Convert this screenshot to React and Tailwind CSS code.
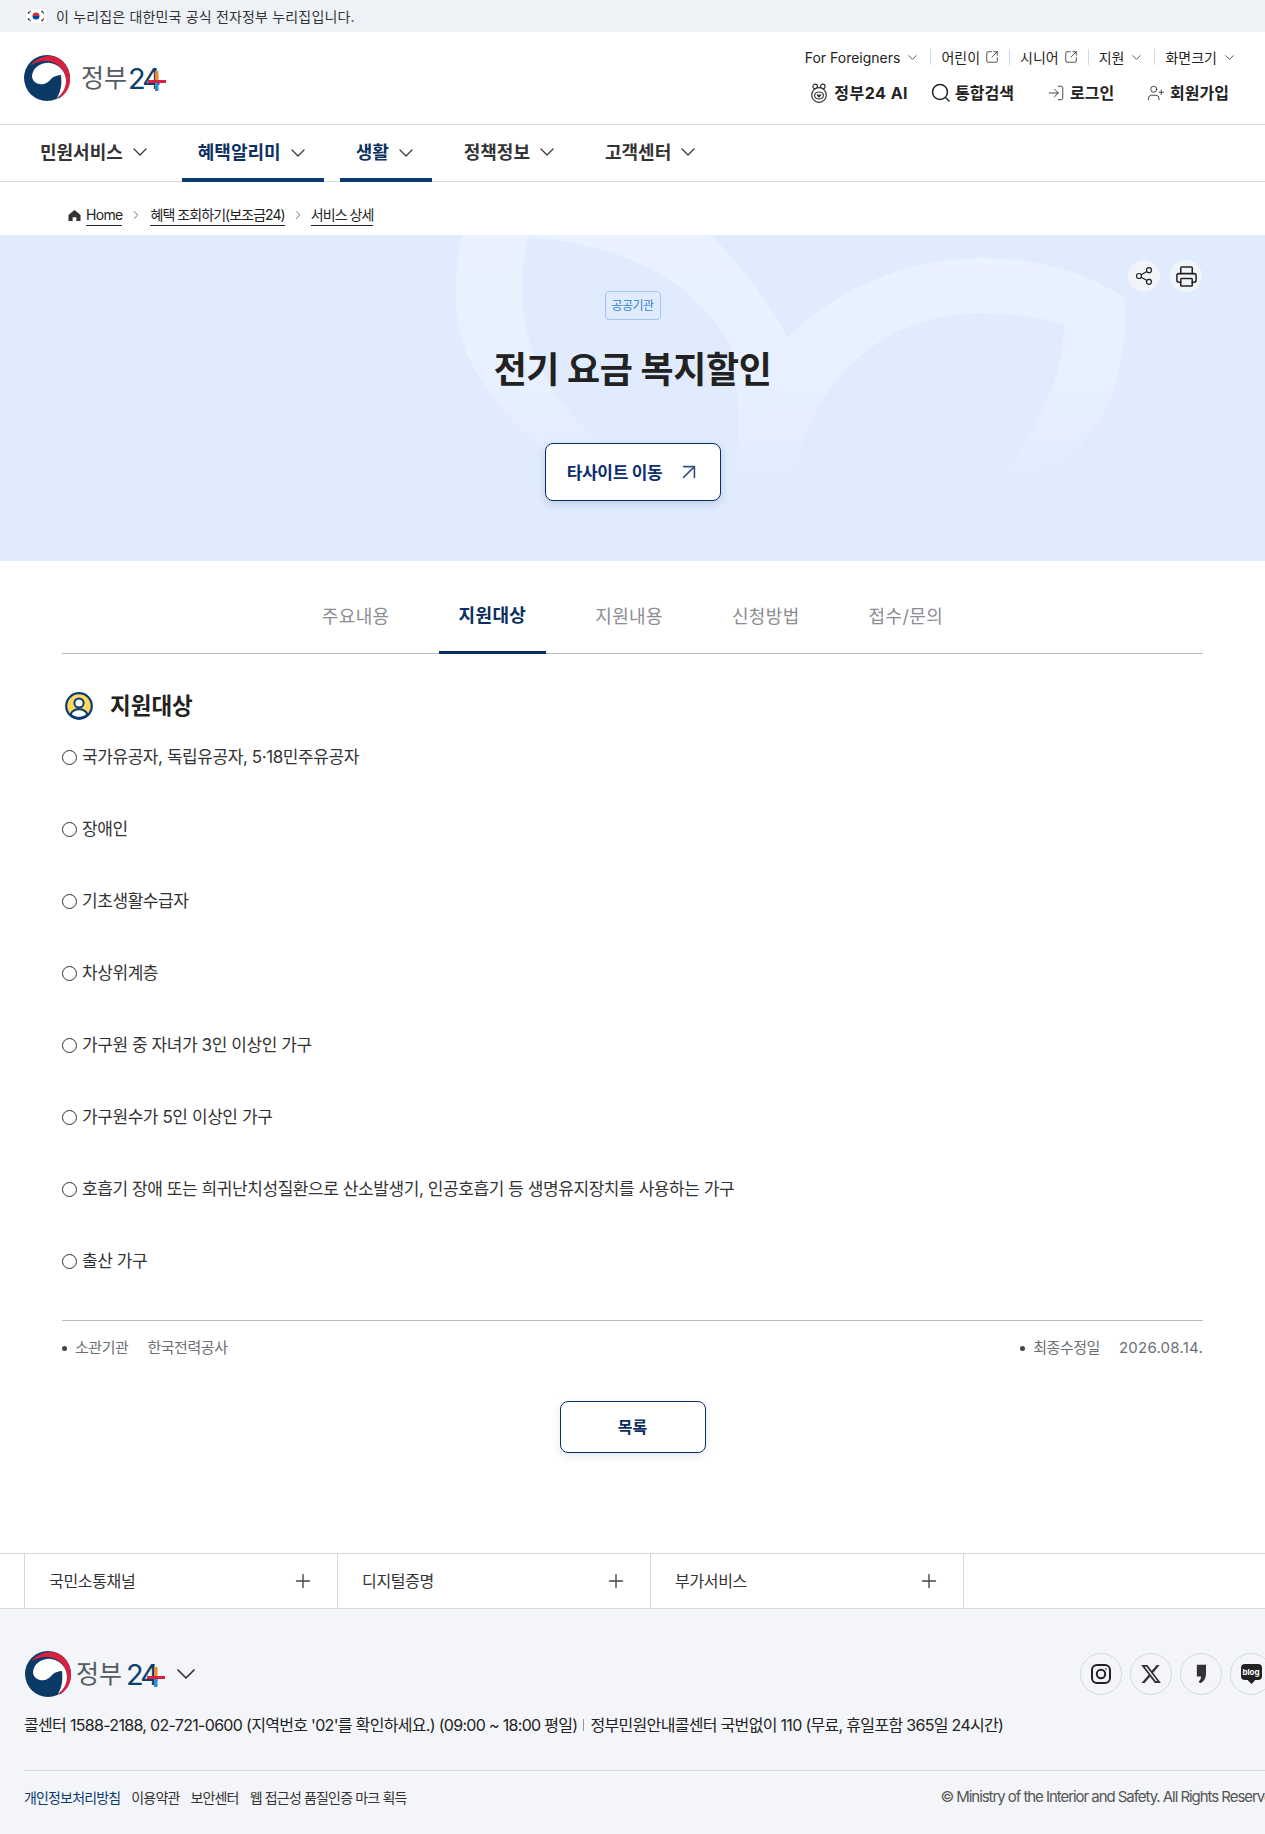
import { ChevronDown, ChevronRight, SquareArrowOutUpRight, LogIn, UserPlus, Share2, Printer, ArrowUpRight, Plus } from "lucide-react";

const navItems = [
  { label: "민원서비스" },
  { label: "혜택알리미", active: true },
  { label: "생활", active: true },
  { label: "정책정보" },
  { label: "고객센터" },
];
const tabs = ["주요내용", "지원대상", "지원내용", "신청방법", "접수/문의"];
const targets = [
  "국가유공자, 독립유공자, 5·18민주유공자",
  "장애인",
  "기초생활수급자",
  "차상위계층",
  "가구원 중 자녀가 3인 이상인 가구",
  "가구원수가 5인 이상인 가구",
  "호흡기 장애 또는 희귀난치성질환으로 산소발생기, 인공호흡기 등 생명유지장치를 사용하는 가구",
  "출산 가구",
];

// taegeuk mark of the logo
function Mark({ className }) {
  return (
    <svg viewBox="0 0 46 46" className={className}>
      <circle cx="23" cy="23" r="23" fill="#0b3a66" />
      <path d="M6 11C12 3 22-1 32 2c10 4 15 15 14 25-1 7-5 13-12 17 4-6 8-13 8-20C41 14 32 6 22 6 15 6 10 8 6 11Z" fill="#d8203f" />
      <path d="M8 21C9 12 18 7 26 8c9 1 16 9 16 18 0 7-4 13-9 17 4-7 5-14 4-23-3 0-7 1-10 4-3 4-7 6-12 5-4-1-7-4-7-8Z" fill="#fff" />
    </svg>
  );
}

function Logo({ big }) {
  return (
    <div className="flex items-center">
      <Mark className="w-[46px] h-[46px] shrink-0" />
      <div className={big ? "relative flex items-center ml-[5px] h-[30px] pt-[2px] pr-[9px]" : "relative flex items-center ml-[11px] h-[30px] pt-[2px] pr-[8px]"}>
        <span className="text-[25px] font-normal text-[#555b61]">정부</span>
        <span className={big ? "text-[29px] font-normal text-[#0b3f6e] ml-[4px] tracking-[-0.1em]" : "text-[29px] font-normal text-[#0b3f6e] ml-[1px] tracking-[-0.1em]"}>24</span>
        <svg viewBox="0 0 18 20" className="absolute right-0 top-[8px] w-[18px] h-[20px]">
          <rect x="7" y="0" width="3.500" height="9" fill="#ee8a2c" />
          <rect x="7" y="12" width="3.500" height="8" fill="#2b8fd0" />
          <rect x="0" y="9" width="18" height="3" fill="#d8203f" />
        </svg>
      </div>
    </div>
  );
}

function Flag() {
  return (
    <svg viewBox="0 0 20 14" className="w-5 h-[14px]">
      <rect width="20" height="14" fill="#fff" />
      <path d="M6.500 7a3.500 3.500 0 0 1 7 0Z" fill="#cd2e3a" />
      <path d="M6.500 7a3.500 3.500 0 0 0 7 0Z" fill="#0047a0" />
      <g stroke="#333" strokeWidth="1.6" strokeDasharray="2 .6">
        <path d="M2 4.500 4.500 2" />
        <path d="M15.500 2 18 4.500" />
        <path d="M2 9.500 4.500 12" />
        <path d="M15.500 12 18 9.500" />
      </g>
    </svg>
  );
}

// 정부24 AI mascot
function AiIcon() {
  return (
    <svg viewBox="0 0 20 20" className="w-[20px] h-[20px]" fill="none" stroke="#333" strokeWidth="1.200">
      <circle cx="6.200" cy="3.500" r="2.300" />
      <circle cx="13.800" cy="3.500" r="2.300" />
      <circle cx="10" cy="12" r="7.300" fill="#fff" />
      <ellipse cx="10" cy="12.500" rx="4.400" ry="3.500" />
      <path d="M8.500 12h3L10 14Z" fill="#333" />
    </svg>
  );
}

function PersonIcon() {
  return (
    <svg viewBox="0 0 28 28" className="w-7 h-7">
      <circle cx="14" cy="14" r="12.800" fill="#fdd85d" stroke="#0b3a78" strokeWidth="2.200" />
      <circle cx="14" cy="11" r="4.600" fill="#fff" stroke="#0b3a78" strokeWidth="2" />
      <path d="M5.500 22.500c1.500-3.500 5-5.200 8.500-5.200s7 1.700 8.500 5.200c-2 2.300-5 3.400-8.500 3.400s-6.500-1.100-8.500-3.400Z" fill="#fff" stroke="#0b3a78" strokeWidth="2" />
    </svg>
  );
}

function Social({ children }) {
  return (
    <div className="w-[42px] h-[42px] shrink-0 rounded-full border border-[#d5d8dc] flex items-center justify-center">
      {children}
    </div>
  );
}

function TopLink({ label, icon, sep }) {
  return (
    <div className="flex items-center">
      {sep && <span className="w-px h-[16px] bg-[#d5d8dc] mx-[10px]" />}
      <span>{label}</span>
      {icon === "down" && <ChevronDown size={15} strokeWidth={1.200} className="ml-[5px] text-[#222]" />}
      {icon === "ext" && <SquareArrowOutUpRight size={14} strokeWidth={1.300} className="ml-[5px] text-[#222]" />}
    </div>
  );
}

function BottomCell({ label }) {
  return (
    <div className="w-[313px] h-full shrink-0 border-r border-[#d5d8dc] flex items-center justify-between pl-6 pr-[23px]">
      <span className="text-[16px] text-[#333] tracking-[-0.02em]">{label}</span>
      <Plus size={22} strokeWidth={1.500} className="text-[#444]" />
    </div>
  );
}

export default function App() {
  return (
    <div className="w-[1265px] h-[1834px] overflow-hidden bg-white text-[#222] font-['Inter','Noto_Sans_CJK_KR',sans-serif]">
      {/* government banner */}
      <div className="h-8 bg-[#eef2f7] flex items-center pl-[26px] text-[14px] text-[#333] tracking-[0.012em]">
        <Flag />
        <span className="ml-[10px]">이 누리집은 대한민국 공식 전자정부 누리집입니다.</span>
      </div>

      {/* header */}
      <header className="h-[93px] border-b border-[#d5d8dc] flex justify-between pl-6 pr-[28px]">
        <div className="flex items-center pb-[1px]">
          <Logo />
        </div>
        <div className="flex flex-col items-end pt-[14px]">
          <div className="flex items-center h-[22px] text-[14px] text-[#222]">
            <TopLink label="For Foreigners" icon="down" />
            <TopLink label="어린이" icon="ext" sep />
            <TopLink label="시니어" icon="ext" sep />
            <TopLink label="지원" icon="down" sep />
            <TopLink label="화면크기" icon="down" sep />
          </div>
          <div className="flex items-center h-[24px] mt-[13px] mr-[8px] text-[16px] font-bold text-[#222]">
            <AiIcon />
            <span className="ml-[5px] tracking-[0.03em]">정부24 AI</span>
            <svg viewBox="0 0 20 20" className="w-5 h-5 ml-[23px]" fill="none" stroke="#222" strokeWidth="1.500">
              <circle cx="9" cy="9" r="7.500" />
              <path d="m14.500 14.500 4 4" />
            </svg>
            <span className="ml-[4px]">통합검색</span>
            <LogIn size={18} strokeWidth={1.100} className="ml-[33px] text-[#222]" />
            <span className="ml-[5px]">로그인</span>
            <UserPlus size={18} strokeWidth={1.100} className="ml-[33px] text-[#222]" />
            <span className="ml-[5px]">회원가입</span>
          </div>
        </div>
      </header>

      {/* main nav */}
      <nav className="h-[57px] border-b border-[#d5d8dc] flex pl-6 gap-4">
        {navItems.map((item) => (
          <div
            key={item.label}
            className={
              item.active
                ? "flex items-center pl-4 pr-[14px] border-b-[4px] border-[#0b3a6e] text-[#0b3262] -mb-px pt-[2px]"
                : "flex items-center pl-4 pr-[14px] text-[#333] pb-[2px]"
            }
          >
            <span className="text-[18px] font-bold">{item.label}</span>
            <ChevronDown size={24} strokeWidth={1.200} className="ml-[5px] text-[#333]" />
          </div>
        ))}
      </nav>

      {/* breadcrumb */}
      <div className="h-[53px] flex items-center pl-[68px] pt-[13px] text-[14px] text-[#222] tracking-[-0.067em]">
        <svg viewBox="0 0 14 14" className="w-[13px] h-[13px]" fill="#333">
          <path d="M7 1 .5 6.500V13h4.500V9h4v4h4.500V6.500Z" />
        </svg>
        <span className="ml-[5px] border-b border-[#222] leading-[20px] tracking-[-0.05em]">Home</span>
        <ChevronRight size={14} strokeWidth={1.200} className="mx-[7px] text-[#333]" />
        <span className="border-b border-[#222] leading-[20px]">혜택 조회하기(보조금24)</span>
        <ChevronRight size={14} strokeWidth={1.200} className="mx-[6px] text-[#333]" />
        <span className="border-b border-[#222] leading-[20px]">서비스 상세</span>
      </div>

      {/* hero */}
      <section className="relative h-[326px] bg-[#e0ecfe] overflow-hidden flex flex-col items-center">
        <svg viewBox="0 235 1265 326" className="absolute inset-0 w-full h-full">
          <defs>
            <linearGradient id="fade" x1="0" y1="235" x2="0" y2="490" gradientUnits="userSpaceOnUse">
              <stop offset="0" stopColor="#eaf2ff" />
              <stop offset="0.5" stopColor="#e8f1ff" />
              <stop offset="1" stopColor="#e0ecfe" />
            </linearGradient>
          </defs>
          <path
            fillRule="evenodd"
            fill="url(#fade)"
            d="M463 235H711C745 270 775 310 787 338 795 390 796 440 793 490H600C520 440 450 370 456 290 456 270 458 250 463 235ZM529 238C600 240 690 270 730 345 742 400 738 440 735 490H690C600 450 560 420 530 345 518 300 522 260 529 238Z"
          />
          <path
            fillRule="evenodd"
            fill="url(#fade)"
            d="M787 338C830 295 900 258 982 258 1050 258 1100 280 1124 298 1130 360 1110 420 1074 452 1050 470 1020 480 991 490H793C795 430 780 380 787 338ZM793 490C800 410 860 313 982 313 1015 313 1045 318 1064 325 1065 370 1040 430 991 490Z"
          />
        </svg>
        <div className="absolute right-[63px] top-[25px] flex gap-[10px]">
          <div className="w-8 h-8 rounded-full bg-[#f1f4f8] flex items-center justify-center">
            <Share2 size={20} strokeWidth={1.400} className="text-[#222]" />
          </div>
          <div className="w-8 h-8 rounded-full bg-[#f1f4f8] flex items-center justify-center">
            <Printer size={23} strokeWidth={1.600} className="text-[#222]" />
          </div>
        </div>
        <div className="relative mt-[56px] h-[29px] w-[56px] rounded-[4px] border border-[#a3c6f0] flex items-center justify-center text-[12px] text-[#2f7fd0] tracking-[-0.05em]">
          공공기관
        </div>
        <h1 className="relative mt-[27px] text-[36px] leading-[46px] font-bold text-[#222] tracking-[-0.012em]">전기 요금 복지할인</h1>
        <div className="relative mt-[50px] w-[176px] h-[58px] pl-[4px] rounded-lg border border-[#0b2e6e] bg-white shadow-[0_3px_8px_rgba(30,60,110,0.18)] flex items-center justify-center text-[#0b2e6e]">
          <span className="text-[17px] font-bold tracking-[-0.02em] pt-[3px]">타사이트 이동</span>
          <ArrowUpRight size={26} strokeWidth={1.500} className="ml-[14px] text-[#33507f]" />
        </div>
      </section>

      <main className="mx-[62px]">
        {/* tabs */}
        <div className="h-[93px] border-b border-[#b9bcc0] flex justify-center gap-[29px]">
          {tabs.map((t) => (
            <div
              key={t}
              className={
                t === "지원대상"
                  ? "px-5 pt-[18px] flex items-center justify-center text-[18px] tracking-[0.02em] font-bold text-[#0b2e62] border-b-[3px] border-[#0b2e62] -mb-px"
                  : "px-5 pt-[18px] flex items-center justify-center text-[18px] tracking-[0.02em] text-[#8a8d91]"
              }
            >
              {t}
            </div>
          ))}
        </div>

        {/* target list */}
        <div className="flex items-center mt-[38px] ml-[3px] h-[28px]">
          <PersonIcon />
          <h2 className="ml-[17px] text-[22.500px] font-bold text-[#222]">지원대상</h2>
        </div>
        <ul className="mt-[25px] flex flex-col gap-[48px] text-[17px] leading-[24px] text-[#333] tracking-[-0.025em]">
          {targets.map((t) => (
            <li key={t} className="flex items-center">
              <span className="w-[15px] h-[15px] rounded-full border border-[#333] mr-[5px] shrink-0" />
              {t}
            </li>
          ))}
        </ul>

        <div className="mt-[47px] border-t border-[#b9bcc0] h-[56px] pb-[1px] flex items-center justify-between text-[15px] text-[#6b6f73] tracking-[-0.03em]">
          <div className="flex items-center">
            <span className="w-[5px] h-[5px] rounded-full bg-[#444] mr-[8px]" />
            <span>소관기관</span>
            <span className="ml-[19px]">한국전력공사</span>
          </div>
          <div className="flex items-center">
            <span className="w-[5px] h-[5px] rounded-full bg-[#444] mr-[8px]" />
            <span>최종수정일</span>
            <span className="ml-[19px] tracking-[0.015em]">2026.08.14.</span>
          </div>
        </div>

        <div className="flex justify-center mt-[25px]">
          <div className="w-[146px] h-[52px] rounded-lg border border-[#0b2e6e] bg-white shadow-[0_3px_8px_rgba(30,60,110,0.12)] flex items-center justify-center text-[16px] font-bold text-[#0b2e62]">
            목록
          </div>
        </div>
      </main>

      {/* footer */}
      <div className="mt-[100px] h-[56px] border-y border-[#d5d8dc] flex pl-6">
        <div className="w-px bg-[#d5d8dc]" />
        <BottomCell label="국민소통채널" />
        <BottomCell label="디지털증명" />
        <BottomCell label="부가서비스" />
      </div>
      <footer className="h-[226px] bg-[#f3f5f8] pl-[25px] w-[1290px]">
        <div className="flex items-center justify-between pt-[43px] h-[86px] pr-[18px]">
          <div className="flex items-center">
            <Logo big />
            <ChevronDown size={32} strokeWidth={1.300} className="ml-[5px] text-[#333]" />
          </div>
          <div className="flex gap-2">
            <Social>
              <svg viewBox="0 0 24 24" className="w-6 h-6" fill="none" stroke="#222" strokeWidth="2">
                <rect x="3" y="3" width="18" height="18" rx="5" />
                <circle cx="12" cy="12" r="4.200" />
                <circle cx="17" cy="7" r=".8" fill="#222" stroke="none" />
              </svg>
            </Social>
            <Social>
              <svg viewBox="0 0 24 24" className="w-[22px] h-[22px]" fill="#333">
                <path d="M18.244 2.250h3.308l-7.227 8.260 8.502 11.240H16.170l-5.214-6.817L4.990 21.750H1.680l7.730-8.835L1.254 2.250H8.080l4.713 6.231zm-1.161 17.520h1.833L7.084 4.126H5.117z" />
              </svg>
            </Social>
            <Social>
              <svg viewBox="0 0 14 24" className="w-[12px] h-[20px]" fill="#333">
                <path d="M2 1h11v10c0 5-2 10-7 12l-2-2c2-1 3-3 3-6H2Z" />
              </svg>
            </Social>
            <Social>
              <div className="relative w-[21px] h-[16px] rounded-[4px] bg-[#222] flex items-center justify-center -mt-[3px]">
                <span className="text-[8px] leading-none font-bold text-white">blog</span>
                <span className="absolute -bottom-[3px] left-[8px] w-[5px] h-[5px] rotate-45 bg-[#222]" />
              </div>
            </Social>
          </div>
        </div>
        <div className="mt-[18px] -ml-px flex items-center h-[24px] text-[16px] text-[#222] tracking-[-0.043em]">
          <span>콜센터 1588-2188, 02-721-0600 (지역번호 '02'를 확인하세요.) (09:00 ~ 18:00 평일)</span>
          <span className="w-px h-[12px] bg-[#999] mx-[6px]" />
          <span>정부민원안내콜센터 국번없이 110 (무료, 휴일포함 365일 24시간)</span>
        </div>
        <div className="mt-[33px] -ml-px border-t border-[#d5d8dc] h-[54px] flex items-center justify-between text-[14px] tracking-[-0.06em] pr-[7px]">
          <div className="flex items-center gap-[11px] text-[#333]">
            <span className="text-[#0b3a6e]">개인정보처리방침</span>
            <span>이용약관</span>
            <span>보안센터</span>
            <span>웹 접근성 품질인증 마크 획득</span>
          </div>
          <span className="text-[15px] text-[#555] tracking-[-0.07em]">© Ministry of the Interior and Safety. All Rights Reserved.</span>
        </div>
      </footer>
    </div>
  );
}
